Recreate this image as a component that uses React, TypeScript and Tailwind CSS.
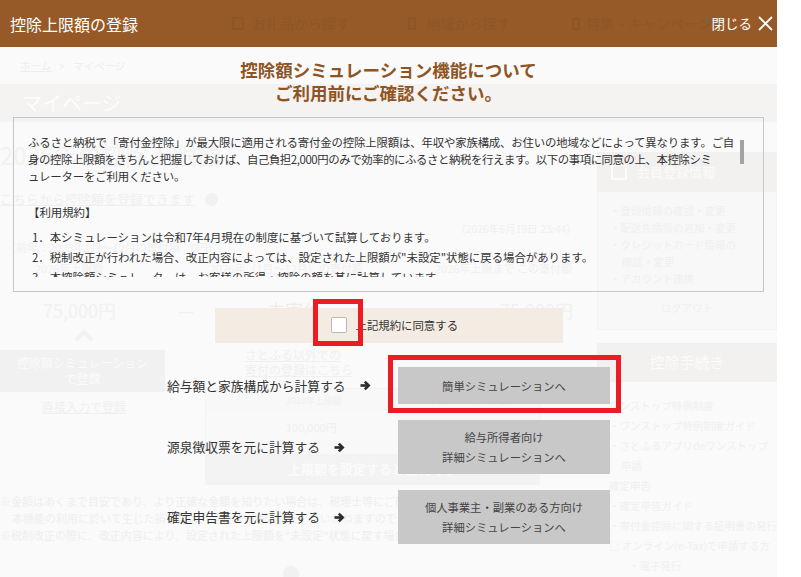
import React from "react";

// faint page behind the modal overlay
function GhostPage() {
  return (
    <div aria-hidden className="pointer-events-none absolute inset-x-0 top-[47px] bottom-0 overflow-hidden whitespace-nowrap">
      <div className="flex h-[37px] items-center pl-[20px] text-[10.5px] text-[#eeeeee]">
        <span className="underline">ホーム</span>
        <span className="ml-[8px]">&gt;</span>
        <span className="ml-[8px]">マイページ</span>
      </div>
      <div className="flex h-[38px] items-center bg-[#f4f3f2] pl-[22px] text-[20px] text-[#fdfdfd]">マイページ</div>

      <div className="flex items-start">
        {/* main column */}
        <div className="flex w-[575px] shrink-0 flex-col text-[#f0f0f0]">
          <div className="h-[66px] shrink-0 pt-[18px] text-[24px] leading-[30px] text-[#f2f2f2]">2026年の控除上限額</div>
          <div className="flex h-[22px] shrink-0 items-center">
            <span className="text-[13px] underline">こちらから控除額を登録できます</span>
            <span className="ml-[10px] h-[13px] w-[13px] rounded-full bg-[#f1f1f1]" />
          </div>
          <div className="mt-[10px] h-[18px] shrink-0 pl-[462px] text-[10.5px] leading-[18px]">(2026年6月19日 23:44)</div>
          <div className="h-[18px] shrink-0 pl-[5px] text-[11px] leading-[18px]">（前年：2025年1月〜12月の寄付額：0円）</div>
          <div className="mt-[2px] flex h-[20px] shrink-0 items-center text-[11px]">
            <span className="ml-[35px] w-[175px]">2026年上限額</span>
            <span className="w-[225px]">2026年（1月〜12月）の寄付額</span>
            <span>2026年上限まで この寄付額</span>
          </div>
          <div className="mt-[19px] flex h-[26px] shrink-0 items-center text-[18px] text-[#f1f1f1]">
            <span className="ml-[43px] w-[135px]">75,000円</span>
            <span className="w-[89px]">—</span>
            <span className="w-[168px] text-[#f1ece8]">未寄付</span>
            <span className="w-[25px]">—</span>
            <span className="ml-[40px]">75,000円</span>
          </div>
          <div className="flex h-[24px] shrink-0 items-center pl-[75px]">
            <svg width="18" height="12" viewBox="0 0 18 12">
              <path d="M1 11 L9 3 L17 11" fill="none" stroke="#f2f2f2" strokeWidth="4" />
            </svg>
          </div>
          <div className="flex">
            <div className="flex w-[165px] shrink-0 flex-col">
              <div className="mt-[3px] flex h-[42px] flex-col items-center justify-center bg-[#f1f1f1] text-[12px] leading-[16px] text-[#fbfbfb]">
                <span>控除額シミュレーション</span>
                <span>で登録</span>
              </div>
              <div className="mt-[6px] pl-[42px] text-[12px] underline">直接入力で登録</div>
            </div>
            <div className="ml-[40px] flex w-[335px] shrink-0 flex-col">
              <div className="pl-[40px] text-[12px] leading-[15px] underline">
                <div>さとふる以外での</div>
                <div>寄付の登録はこちら</div>
              </div>
              <div className="mt-[11px] flex h-[97px] flex-col border border-[#f3f3f3] bg-[#f8f8f8]">
                <div className="flex h-[24px] items-center gap-[60px] pl-[80px] text-[9px]">
                  <span>2018年上限額</span>
                  <span>2018年(1月〜12月)の寄付額</span>
                </div>
                <div className="flex h-[28px] items-center gap-[80px] bg-[#f9f9f9] pl-[80px] text-[11px]">
                  <span>100,000円</span>
                  <span>—</span>
                  <span>20,000円</span>
                </div>
                <div className="mt-auto flex h-[30px] items-center justify-center bg-[#f3f3f3] text-[13px] font-bold text-[#fbfbfb]">上限額を設定すると便利です</div>
              </div>
            </div>
          </div>
          <div className="mt-[8px] text-[11px] leading-[17px] text-[#efefef]">
            <div>※金額はあくまで目安であり、より正確な金額を知りたい場合は、税理士等にご確認ください。</div>
            <div className="pl-[12px]">本機能の利用に於いて生じた損害等は、当社は一切の責任を負いかねますのでご了承ください。</div>
            <div>※税制改正の際に、改正内容により、設定された上限額を"未設定"状態に戻す場合があります。</div>
          </div>
          <div className="mt-[22px] ml-[283px] h-[16px] w-[16px] rounded-full bg-[#f1f1f1]" />
        </div>

        {/* sidebar */}
        <div className="ml-[22px] mt-[30px] flex w-[180px] shrink-0 flex-col text-[10.5px] text-[#f0f0f0]">
          <div className="flex h-[40px] items-center gap-[10px] bg-[#f2f1f0] pl-[14px] text-[13px] text-[#fbfbfb]">
            <span className="h-[16px] w-[16px] rounded-[2px] border-2 border-[#fbfbfb]" />
            会員登録情報
          </div>
          <div className="flex h-[138px] flex-col border-x border-b border-[#f3f3f3] bg-[#f8f8f8] px-[12px] pt-[10px] leading-[17px]">
            <div>・登録情報の確認・変更</div>
            <div>・配送先情報の追加・変更</div>
            <div>・クレジットカード情報の</div>
            <div className="pl-[12px]">確認・変更</div>
            <div>・アカウント連携</div>
            <div className="mt-[12px] text-center">ログアウト</div>
          </div>
          <div className="mt-[13px] flex h-[39px] items-center justify-center bg-[#f2f1f0] text-[15px] text-[#fbfbfb]">控除手続き</div>
          <div className="flex flex-col px-[12px] pt-[14px] leading-[20px]">
            <div>ワンストップ特例制度</div>
            <div>・ワンストップ特例制度ガイド</div>
            <div>・さとふるアプリdeワンストップ</div>
            <div className="pl-[12px]">申請</div>
            <div>確定申告</div>
            <div>・確定申告ガイド</div>
            <div>・寄付金控除に関する証明書の発行</div>
            <div>□ オンライン(e-Tax)で申請する方</div>
            <div className="pl-[20px]">・電子発行</div>
          </div>
        </div>
      </div>
    </div>
  );
}

function Arrow() {
  return (
    <svg width="11" height="11" viewBox="0 0 11 11" className="ml-[14px] shrink-0">
      <path d="M0.5 5.5 H8.6" stroke="#2b2b2b" strokeWidth="2.6" />
      <path d="M4.8 1.6 L8.7 5.5 L4.8 9.4" fill="none" stroke="#2b2b2b" strokeWidth="2.6" />
    </svg>
  );
}

const options = [
  { label: "給与額と家族構成から計算する", lines: ["簡単シミュレーションへ"], tall: false, marked: true },
  { label: "源泉徴収票を元に計算する", lines: ["給与所得者向け", "詳細シミュレーションへ"], tall: true, marked: false },
  { label: "確定申告書を元に計算する", lines: ["個人事業主・副業のある方向け", "詳細シミュレーションへ"], tall: true, marked: false },
];

export default function App() {
  return (
    <div className="relative h-[577px] w-[801px] overflow-hidden bg-white font-['Noto_Sans_CJK_JP',sans-serif]">
      <div className="relative h-full w-[777px] bg-[#fafafa]">
        <GhostPage />

        <div className="relative flex h-full flex-col">
          {/* header */}
          <div className="flex h-[47px] shrink-0 items-center bg-[#965a28] pl-[10px] pr-[4px] text-white">
            <span className="w-[222px] text-[16px]">控除上限額の登録</span>
            <div aria-hidden className="flex flex-1 items-center overflow-hidden whitespace-nowrap text-[14px] text-[#8e5526]">
              <span className="mr-[8px] h-[13px] w-[13px] border-2 border-[#8e5526]" />
              <span className="w-[184px]">お礼品から探す</span>
              <span className="mr-[10px] h-[13px] w-[9px] border-2 border-[#8e5526]" />
              <span className="w-[171px]">地域から探す</span>
              <span className="mr-[6px] h-[14px] w-[9px] rounded-full border-2 border-[#8e5526]" />
              <span>特集・キャンペーン</span>
            </div>
            <button className="flex items-center gap-[6px] text-[13.5px] text-white">
              閉じる
              <svg width="15" height="15" viewBox="0 0 15 15">
                <path d="M1 1 L14 14 M14 1 L1 14" stroke="white" strokeWidth="1.8" />
              </svg>
            </button>
          </div>

          {/* heading */}
          <h1 className="pt-[11px] text-center text-[17.5px] font-bold leading-[23px] text-[#8f5424]">
            控除額シミュレーション機能について
            <br />
            ご利用前にご確認ください。
          </h1>

          {/* terms */}
          <div className="relative mx-[13px] mt-[13px] h-[175px] shrink-0 border border-[#c6c6c6] px-[14px] pt-[16px]">
            <div className="h-[143px] overflow-hidden text-[11.4px] text-[#333]">
              <div className="whitespace-nowrap leading-[17px]">
                <div className="tracking-[-0.15px]">ふるさと納税で「寄付金控除」が最大限に適用される寄付金の控除上限額は、年収や家族構成、お住いの地域などによって異なります。ご自</div>
                <div className="tracking-[-0.41px]">身の控除上限額をきちんと把握しておけば、自己負担2,000円のみで効率的にふるさと納税を行えます。以下の事項に同意の上、本控除シミ</div>
                <div className="tracking-[-0.15px]">ュレーターをご利用ください。</div>
              </div>
              <div className="mt-[19px] leading-[17px]">【利用規約】</div>
              <ol className="mt-[6px] whitespace-nowrap pl-[4px] leading-[20px]">
                <li>1．本シミュレーションは令和7年4月現在の制度に基づいて試算しております。</li>
                <li>2．税制改正が行われた場合、改正内容によっては、設定された上限額が"未設定"状態に戻る場合があります。</li>
                <li>3．本控除額シミュレーターは、お客様の所得・控除の額を基に計算しています。</li>
                <li>4．本シミュレーションの結果は目安であり、実際の控除額を保証するものではありません。</li>
              </ol>
            </div>
            <div className="absolute right-[19px] top-[22px] h-[24px] w-[4px] bg-[#a3a3a3]" />
          </div>

          {/* agreement */}
          <div className="mx-auto mt-[16px] flex h-[35px] w-[348px] shrink-0 items-center bg-[#f4ebe3] pl-[116px]">
            <label className="flex items-center text-[11.4px] text-[#333]">
              <span className="relative h-[16px] w-[16px] rounded-[2px] border border-[#b8b8b8] bg-white">
                <span className="absolute -left-[19px] -top-[19px] h-[47px] w-[50px] border-[5px] border-[#ed1c24]" />
              </span>
              <span className="ml-[9px]">上記規約に同意する</span>
            </label>
          </div>

          {/* calculation options */}
          <div className="mx-auto mt-[24px] flex w-[443px] flex-col gap-[16px]">
            {options.map((o) => (
              <div key={o.label} className="flex items-center">
                <div className="flex w-[231px] items-center text-[12.75px] text-[#333]">
                  <span>{o.label}</span>
                  <Arrow />
                </div>
                <div
                  className={`relative flex w-[212px] flex-col items-center justify-center bg-[#c8c8c8] text-[11.3px] leading-[20px] text-[#444] ${
                    o.tall ? "h-[54px]" : "h-[37px]"
                  }`}
                >
                  {o.lines.map((l) => (
                    <span key={l}>{l}</span>
                  ))}
                  {o.marked && (
                    <span className="absolute -left-[10px] -top-[12px] h-[58px] w-[233px] border-[5px] border-[#ed1c24]" />
                  )}
                </div>
              </div>
            ))}
          </div>
        </div>
      </div>
    </div>
  );
}
